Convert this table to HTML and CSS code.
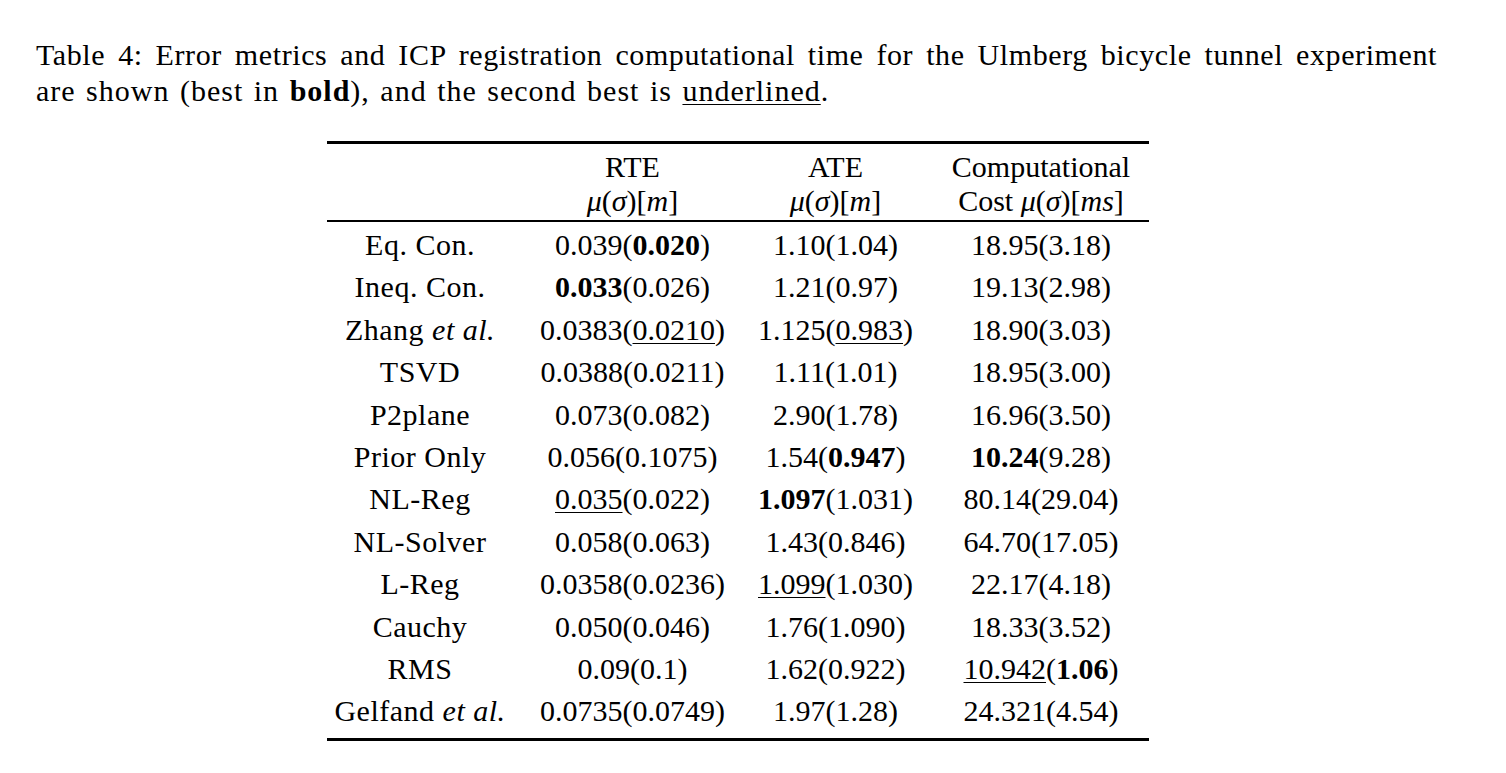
FILE: index.html
```html
<!DOCTYPE html>
<html lang="en">
<head>
<meta charset="utf-8">
<title>Table 4</title>
<link rel="stylesheet" href="styles.css">
</head>
<body>
<div class="page">
  <p class="caption">
    <span class="cap-line cap-just">Table 4: Error metrics and ICP registration computational time for the Ulmberg bicycle tunnel experiment</span>
    <span class="cap-line cap-rest">are shown (best in <b>bold</b>), and the second best is <u class="ul">underlined</u>.</span>
  </p>
  <table class="tbl">
    <colgroup>
      <col class="c1"><col class="c2"><col class="c3"><col class="c4">
    </colgroup>
    <thead>
      <tr class="h1">
        <th></th><th>RTE</th><th>ATE</th><th class="last">Computational</th>
      </tr>
      <tr class="h2">
        <th></th>
        <th><i>μ</i>(<i>σ</i>)[<i>m</i>]</th>
        <th><i>μ</i>(<i>σ</i>)[<i>m</i>]</th>
        <th class="last">Cost <i>μ</i>(<i>σ</i>)[<i>ms</i>]</th>
      </tr>
    </thead>
    <tbody>
      <tr class="first"><td>Eq. Con.</td><td>0.039(<b>0.020</b>)</td><td>1.10(1.04)</td><td class="last">18.95(3.18)</td></tr>
      <tr><td>Ineq. Con.</td><td><b>0.033</b>(0.026)</td><td>1.21(0.97)</td><td class="last">19.13(2.98)</td></tr>
      <tr><td>Zhang <i>et al.</i></td><td>0.0383(<u class="ul">0.0210</u>)</td><td>1.125(<u class="ul">0.983</u>)</td><td class="last">18.90(3.03)</td></tr>
      <tr><td>TSVD</td><td>0.0388(0.0211)</td><td>1.11(1.01)</td><td class="last">18.95(3.00)</td></tr>
      <tr><td>P2plane</td><td>0.073(0.082)</td><td>2.90(1.78)</td><td class="last">16.96(3.50)</td></tr>
      <tr><td>Prior Only</td><td>0.056(0.1075)</td><td>1.54(<b>0.947</b>)</td><td class="last"><b>10.24</b>(9.28)</td></tr>
      <tr><td>NL-Reg</td><td><u class="ul">0.035</u>(0.022)</td><td><b>1.097</b>(1.031)</td><td class="last">80.14(29.04)</td></tr>
      <tr><td>NL-Solver</td><td>0.058(0.063)</td><td>1.43(0.846)</td><td class="last">64.70(17.05)</td></tr>
      <tr><td>L-Reg</td><td>0.0358(0.0236)</td><td><u class="ul">1.099</u>(1.030)</td><td class="last">22.17(4.18)</td></tr>
      <tr><td>Cauchy</td><td>0.050(0.046)</td><td>1.76(1.090)</td><td class="last">18.33(3.52)</td></tr>
      <tr><td>RMS</td><td>0.09(0.1)</td><td>1.62(0.922)</td><td class="last"><u class="ul">10.942</u>(<b>1.06</b>)</td></tr>
      <tr class="final"><td>Gelfand <i>et al.</i></td><td>0.0735(0.0749)</td><td>1.97(1.28)</td><td class="last">24.321(4.54)</td></tr>
    </tbody>
  </table>
</div>
</body>
</html>
```
FILE: styles.css
```css
html, body {
  margin: 0;
  padding: 0;
  background: #ffffff;
}

body {
  font-family: "Liberation Serif", "Times New Roman", serif;
  color: #000000;
  font-size: 30px;
}

.page {
  padding: 37px 0 0 36px;
}

.caption {
  margin: 0;
  width: 1401px;
  line-height: 36px;
}

.cap-line {
  display: block;
}

.cap-just {
  text-align: justify;
  text-align-last: justify;
  letter-spacing: 0.6px;
}

.cap-rest {
  letter-spacing: 1px;
  word-spacing: 2px;
}

.ul {
  text-decoration: underline;
  text-decoration-thickness: 1px;
  text-underline-offset: 3px;
}

.tbl {
  margin: 32px 0 0 291px;
  border-collapse: collapse;
  border-top: 3px solid #000;
  border-bottom: 3px solid #000;
  table-layout: fixed;
  width: 822px;
}

.c1 { width: 186px; }
.c2 { width: 239px; }
.c3 { width: 167px; }
.c4 { width: 230px; }

.tbl th,
.tbl td {
  padding: 0;
  text-align: center;
  font-weight: normal;
  white-space: nowrap;
}

.tbl tbody td:first-child {
  letter-spacing: 0.5px;
}

.tbl th.last,
.tbl td.last {
  padding-left: 14px;
}

.tbl thead th {
  line-height: 34px;
}

.tbl .h1 th {
  padding-top: 6px;
}

.tbl .h2 th {
  padding-bottom: 2px;
  border-bottom: 2px solid #000;
}

.tbl tbody td {
  line-height: 42.4px;
}

.tbl tbody .first td {
  padding-top: 2px;
}

.tbl tbody .final td {
  padding-bottom: 5px;
}

.tbl b {
  font-weight: bold;
}
```
